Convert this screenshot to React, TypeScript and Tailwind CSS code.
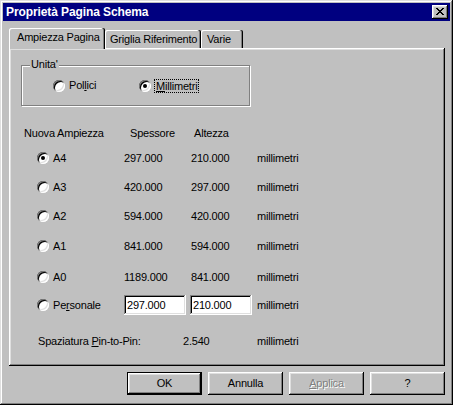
import React from 'react';

type PaperSize = {
  name: string;
  width: string;
  height: string;
  checked?: boolean;
  gap: string;
};

const PAPER_SIZES: PaperSize[] = [
  { name: 'A4', width: '297.000', height: '210.000', checked: true, gap: 'mt-[5px]' },
  { name: 'A3', width: '420.000', height: '297.000', gap: 'mt-[9px]' },
  { name: 'A2', width: '594.000', height: '420.000', gap: 'mt-[9px]' },
  { name: 'A1', width: '841.000', height: '594.000', gap: 'mt-[10px]' },
  { name: 'A0', width: '1189.000', height: '841.000', gap: 'mt-[11px]' },
];

const Radio = ({ checked = false }: { checked?: boolean }) => (
  <span className="flex h-[12px] w-[12px] shrink-0 items-center justify-center rounded-full bg-white shadow-[inset_1px_1px_0_#808080,inset_-1px_-1px_0_#fff,inset_2px_2px_0_#000,inset_-2px_-2px_0_#dfdfdf]">
    {checked && <span className="h-[4px] w-[4px] rounded-full bg-black" />}
  </span>
);

const Field = ({ value }: { value: string }) => (
  <div className="flex h-[20px] w-[62px] items-center bg-white pl-[3px] shadow-[inset_-1px_-1px_0_#fff,inset_1px_1px_0_#808080,inset_-2px_-2px_0_#dfdfdf,inset_2px_2px_0_#000]">
    {value}
  </div>
);

const Button = ({ children, isDefault = false }: { children: React.ReactNode; isDefault?: boolean }) => (
  <div
    className={
      isDefault
        ? 'flex h-[23px] w-[75px] items-center justify-center shadow-[inset_0_0_0_1px_#000,inset_-2px_-2px_0_#000,inset_2px_2px_0_#fff,inset_-3px_-3px_0_#808080,inset_3px_3px_0_#dfdfdf]'
        : 'flex h-[23px] w-[75px] items-center justify-center shadow-[inset_-1px_-1px_0_#000,inset_1px_1px_0_#fff,inset_-2px_-2px_0_#808080,inset_2px_2px_0_#dfdfdf]'
    }
  >
    {children}
  </div>
);

const App = () => {
  return (
    <div className="flex h-[405px] w-[453px] flex-col bg-[#c0c0c0] p-[3px] font-['Liberation_Sans',Arial,sans-serif] text-[11px] leading-[13px] tracking-[-0.2px] text-black shadow-[inset_-1px_-1px_0_#000,inset_1px_1px_0_#dfdfdf,inset_-2px_-2px_0_#808080,inset_2px_2px_0_#fff]">
      {/* title bar */}
      <div className="flex h-[18px] items-center justify-between bg-[#000080] pl-[3px] pr-[2px]">
        <span className="text-[12px] font-bold tracking-[-0.1px] text-white">Proprietà Pagina Schema</span>
        <div className="h-[14px] w-[16px] pl-[4px] pt-[3px] shadow-[inset_-1px_-1px_0_#000,inset_1px_1px_0_#fff,inset_-2px_-2px_0_#808080,inset_2px_2px_0_#dfdfdf] bg-[#c0c0c0]">
          <svg width="8" height="7" viewBox="0 0 8 7" shapeRendering="crispEdges" className="block">
            <path
              d="M0 0h2v1H0zM6 0h2v1H6zM1 1h2v1H1zM5 1h2v1H5zM2 2h4v1H2zM3 3h2v1H3zM2 4h4v1H2zM1 5h2v1H1zM5 5h2v1H5zM0 6h2v1H0zM6 6h2v1H6z"
              fill="#000"
            />
          </svg>
        </div>
      </div>

      {/* tabs */}
      <div className="ml-[6px] mt-[7px] flex h-[20px] items-end whitespace-nowrap">
        <div className="relative z-10 -mb-px h-[21px] w-[96px] rounded-t-[2px] bg-[#c0c0c0] pl-[8px] pt-[3px] shadow-[inset_-1px_0_0_#000,inset_-2px_0_0_#808080,inset_1px_1px_0_#fff]">
          Ampiezza Pagina
        </div>
        <div className="h-[18px] w-[96px] rounded-t-[2px] pl-[5px] pt-[3px] shadow-[inset_-1px_0_0_#000,inset_-2px_0_0_#808080,inset_1px_1px_0_#fff]">
          Griglia Riferimento
        </div>
        <div className="h-[18px] w-[42px] rounded-t-[2px] pl-[6px] pt-[3px] shadow-[inset_-1px_0_0_#000,inset_-2px_0_0_#808080,inset_1px_1px_0_#fff]">
          Varie
        </div>
      </div>

      {/* page */}
      <div className="ml-[6px] flex h-[318px] w-[436px] flex-col pt-[17px] shadow-[inset_-1px_-1px_0_#000,inset_1px_1px_0_#fff,inset_-2px_-2px_0_#808080,inset_2px_2px_0_#dfdfdf]">
        <div className="relative ml-[12px] h-[41px] w-[229px] border border-[#808080] shadow-[inset_1px_1px_0_#fff,1px_1px_0_#fff]">
          <span className="absolute left-[8px] top-[-8px] bg-[#c0c0c0] px-[1px]">Unita'</span>
          <div className="flex h-full items-center pl-[31px]">
            <div className="flex w-[86px] items-center">
              <Radio />
              <span className="ml-[4px]">
                Pol<u>l</u>ici
              </span>
            </div>
            <div className="flex items-center">
              <Radio checked />
              <span className="ml-[3px] border border-dotted border-black px-[1px] leading-[12px]">
                <u>M</u>illimetri
              </span>
            </div>
          </div>
        </div>

        <div className="mt-[17px] flex h-[20px] items-center pl-[15px]">
          <span className="w-[106px]">Nuova Ampiezza</span>
          <span className="w-[64px]">Spessore</span>
          <span>Altezza</span>
        </div>

        {PAPER_SIZES.map((size) => (
          <div key={size.name} className={`${size.gap} flex h-[20px] items-center pl-[28px]`}>
            <Radio checked={size.checked} />
            <span className="ml-[4px] w-[71px]">{size.name}</span>
            <span className="w-[67px]">{size.width}</span>
            <span className="w-[66px]">{size.height}</span>
            <span>millimetri</span>
          </div>
        ))}

        <div className="mt-[8px] flex h-[20px] items-center pl-[28px]">
          <Radio />
          <span className="ml-[4px] w-[71px]">
            Pe<u>r</u>sonale
          </span>
          <Field value="297.000" />
          <div className="ml-[4px]">
            <Field value="210.000" />
          </div>
          <span className="ml-[5px]">millimetri</span>
        </div>

        <div className="mt-[16px] flex h-[20px] items-center pl-[29px]">
          <span className="w-[145px]">
            Spaziatura <u>P</u>in-to-Pin:
          </span>
          <span className="w-[74px]">2.540</span>
          <span>millimetri</span>
        </div>
      </div>

      {/* buttons */}
      <div className="ml-[6px] mt-[6px] flex w-[436px] justify-end gap-[6px]">
        <Button isDefault>OK</Button>
        <Button>Annulla</Button>
        <Button>
          <span className="text-[#808080] [text-shadow:1px_1px_0_#fff]">
            <u>A</u>pplica
          </span>
        </Button>
        <Button>?</Button>
      </div>
    </div>
  );
};

export default App;
